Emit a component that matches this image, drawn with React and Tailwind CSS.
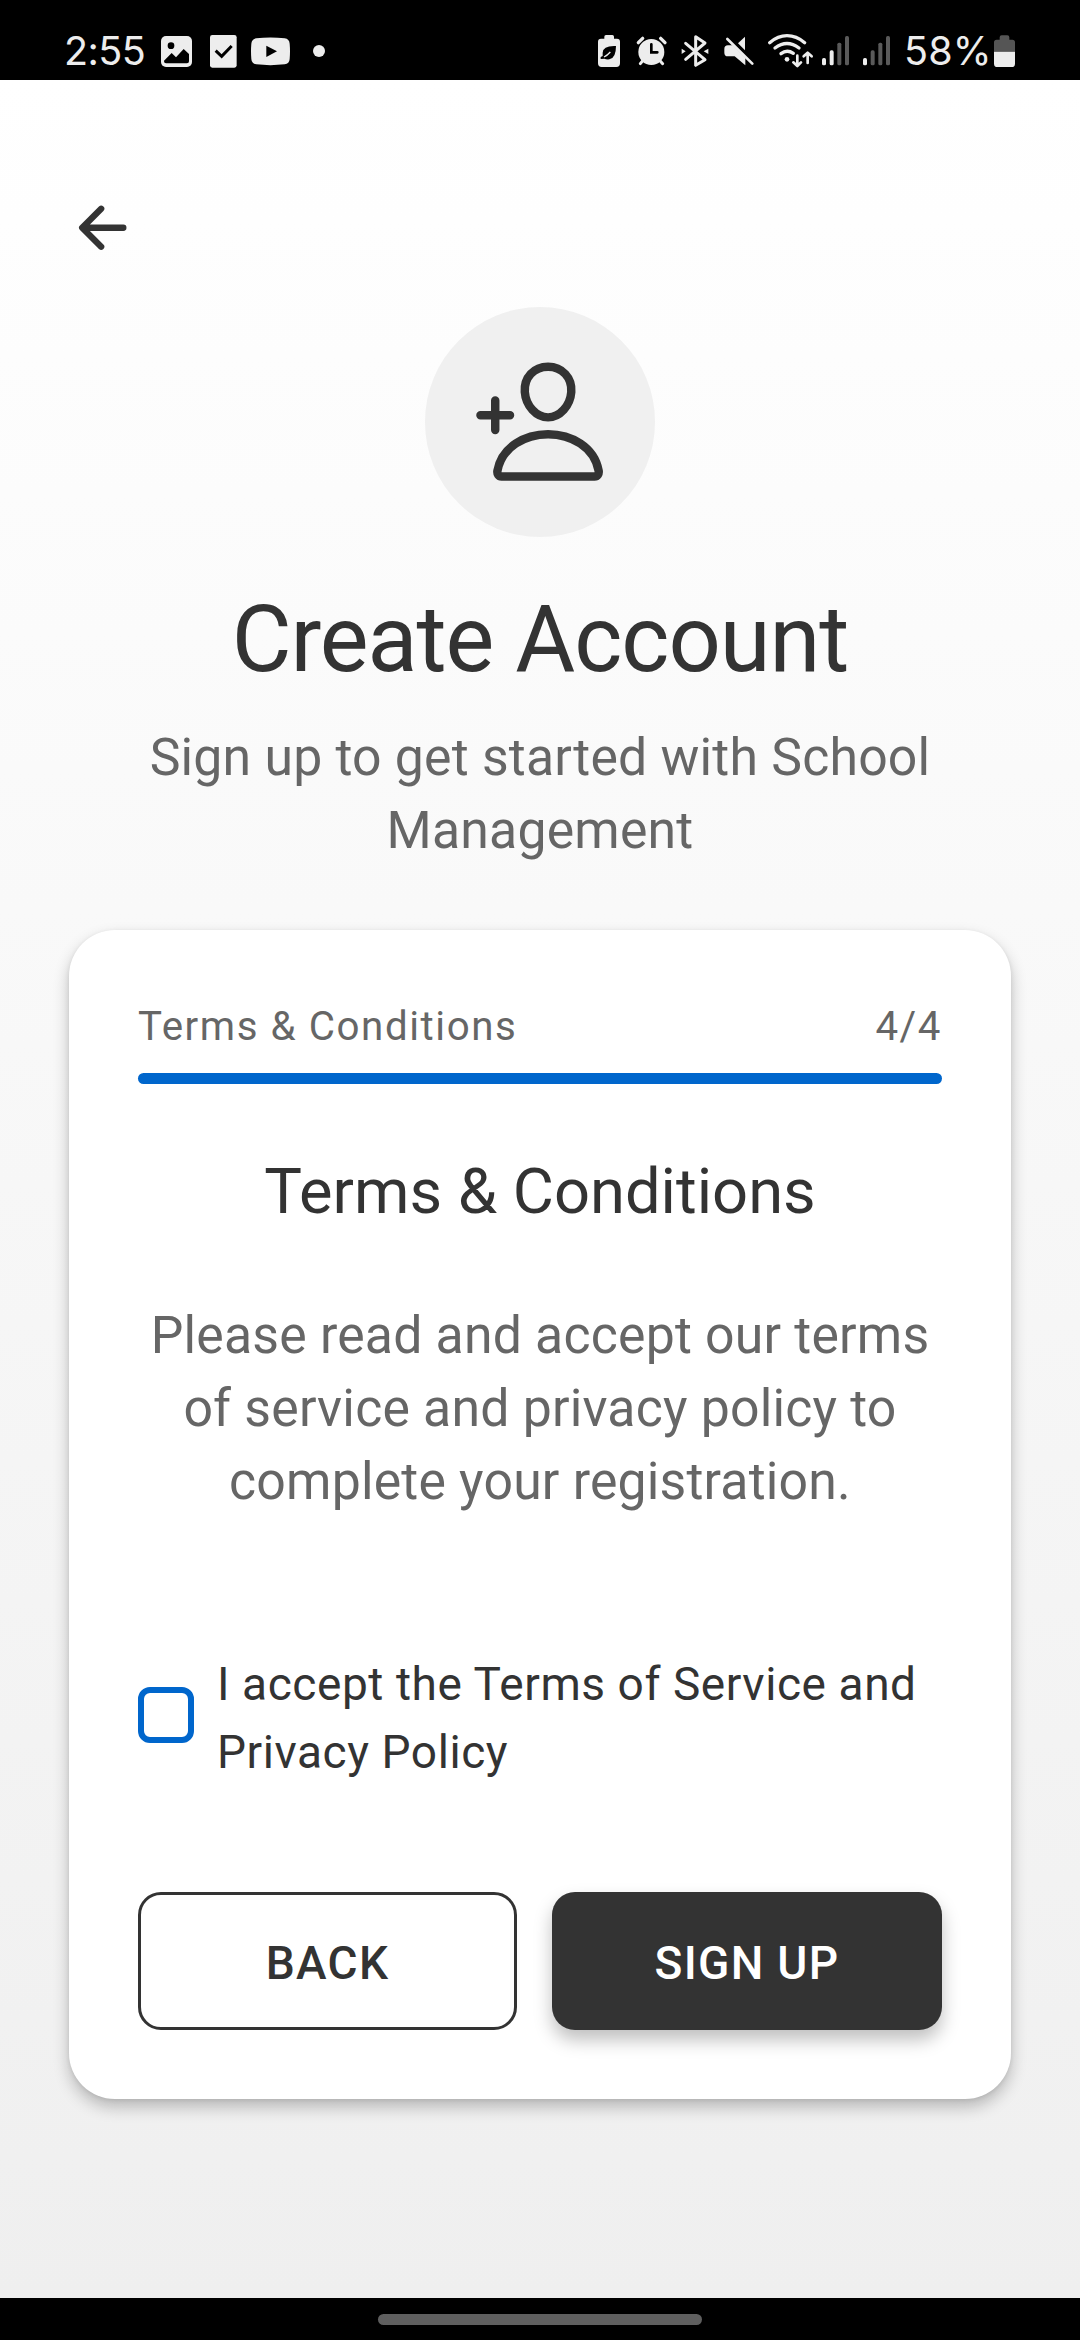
import React from "react";
import { IoArrowBackOutline, IoPersonAddOutline } from "react-icons/io5";

// Status icons share one vertical grid: 240 units for the 80px bar height.
function Glyph({ x, w, className, children }) {
  return (
    <svg
      viewBox={`${x} 0 ${w} 240`}
      width={w / 3}
      height="80"
      fill="#ededed"
      className={`shrink-0 overflow-visible ${className}`}
    >
      {children}
    </svg>
  );
}

function SignalBars({ x, lit, className }) {
  const tops = [174, 151, 128, 108];
  return (
    <Glyph x={x} w={81} className={className}>
      {tops.map((top, i) => (
        <rect key={top} x={x + i * 23} y={top} width="12" height={196 - top} rx="5" fill={i < lit ? "#ededed" : "#5a5a5a"} />
      ))}
    </Glyph>
  );
}

function StatusBar() {
  return (
    <header className="flex h-20 justify-between bg-black pl-16 pr-[65px] font-['Inter',sans-serif] text-[39.5px] leading-[102px] text-[#ededed]">
      <div className="flex h-20">
        <span className="w-20 whitespace-nowrap tracking-[-0.6px]">2:55</span>
        <Glyph x={363} w={93} className="ml-[17px]">
          <rect x="363" y="108" width="93" height="93" rx="15" />
          <circle cx="393" cy="137" r="10" fill="#000" />
          <path d="M372 182 L395 159 L408 172 L431 147 L447 162 V184 Q447 190 441 190 H378 Q372 190 372 184Z" fill="#000" />
        </Glyph>
        <Glyph x={510} w={80} className="ml-[18px]">
          <rect x="510" y="105" width="80" height="98" rx="7" />
          <path d="M527 152 L545 169 L575 138" fill="none" stroke="#000" strokeWidth="9" />
        </Glyph>
        <Glyph x={633} w={117} className="ml-[14.33px]">
          <path d="M649 115 Q691 110 734 115 Q748 117 749 131 Q751 154 749 177 Q748 191 734 193 Q691 198 649 193 Q635 191 634 177 Q632 154 634 131 Q635 117 649 115Z" />
          <path d="M679 137 L711 154 L679 171Z" fill="#000" />
        </Glyph>
        <Glyph x={819} w={36} className="ml-[23px]">
          <circle cx="837" cy="153" r="18" />
        </Glyph>
      </div>
      <div className="flex h-20">
        <Glyph x={54} w={66}>
          <path d="M73 110 Q73 105 78 105 H97 Q102 105 102 110 V116 H111 Q120 116 120 125 V190 Q120 201 109 201 H65 Q54 201 54 190 V125 Q54 116 63 116 H73Z" />
          <path d="M108 138 Q69 136 68 158 V168 L62 171 V177 L73 176 Q79 179 88 178 Q108 175 108 138Z" fill="#000" />
          <path d="M72 171 Q81 167 91 156" fill="none" stroke="#ededed" strokeWidth="4" />
        </Glyph>
        <Glyph x={171} w={88} className="ml-[17px]">
          <circle cx="214" cy="156" r="39" />
          <path d="M175 128 L188 115 M255 128 L242 115" stroke="#ededed" strokeWidth="10" strokeLinecap="round" />
          <path d="M190 180 L181 191 M238 180 L248 191" stroke="#ededed" strokeWidth="9" strokeLinecap="round" />
          <path d="M214 133 V157 H232" fill="none" stroke="#000" strokeWidth="8" strokeLinecap="round" />
        </Glyph>
        <Glyph x={303} w={84} className="ml-[14.67px]">
          <path d="M317 130 L375 179 L347 196 V110 L375 129 L317 178" fill="none" stroke="#ededed" strokeWidth="9" strokeLinejoin="round" strokeLinecap="round" />
          <path d="M305 146 L317 154 L305 162Z M385 146 L371 154 L385 162Z" />
        </Glyph>
        <Glyph x={431} w={89} className="ml-[14.67px]">
          <path d="M494 110 V151 L473 130Z" />
          <path d="M443 136 H457 L495 173 V196 L463 169 H443 Q432 169 432 158 V147 Q432 136 443 136Z" />
          <path d="M441 117 L516 191" stroke="#ededed" strokeWidth="8" strokeLinecap="round" />
        </Glyph>
        <Glyph x={563} w={137} className="ml-[14.33px]">
          <g fill="none" stroke="#ededed" strokeWidth="10" strokeLinecap="round">
            <path d="M568 128 Q593 107 620 107 Q648 107 673 128" />
            <path d="M584 144 Q620 117 656 144" />
            <path d="M602 161 Q620 147 639 160" />
          </g>
          <circle cx="620" cy="178" r="7" />
          <path d="M651 167 V197 M639 187 L651 198 L662 187 M682 189 V159 M670 169 L682 158 L694 169" fill="none" stroke="#ededed" strokeWidth="8" strokeLinecap="round" strokeLinejoin="round" />
        </Glyph>
        <SignalBars x={66} lit={2} className="ml-[8.67px]" />
        <SignalBars x={189} lit={1} className="ml-[14px]" />
        <span className="w-[104px] whitespace-nowrap pl-[14px] tracking-[0.2px]">58%</span>
        <Glyph x={582} w={63}>
          <path d="M599 112 Q599 106 605 106 H622 Q628 106 628 112 V119 H637 Q645 119 645 127 V155 H582 V127 Q582 119 590 119 H599Z" fill="#555" />
          <path d="M582 155 H645 V191 Q645 201 635 201 H592 Q582 201 582 191Z" />
        </Glyph>
      </div>
    </header>
  );
}

export default function App() {
  return (
    <div className="flex h-[2340px] w-[1080px] flex-col bg-black font-['Roboto',sans-serif] text-[#333333]">
      <StatusBar />

      <main className="flex h-[2218px] flex-col bg-linear-to-b from-white to-[#efefef] px-[69px]">
        <button aria-label="Go back" className="mt-[114px] size-[67.5px]">
          <IoArrowBackOutline className="size-[67.5px]" />
        </button>

        <div className="mt-[45.5px] flex size-[230px] items-center justify-center self-center rounded-full bg-[#f0f0f0]">
          <IoPersonAddOutline className="size-[135.2px]" />
        </div>

        <h1 className="mt-[46px] text-center text-[92px] leading-[113px] tracking-[-1.03px]">Create Account</h1>
        <p className="mt-[25px] text-center text-[51.75px] leading-[73px] tracking-[0.2px] text-[#666666]">
          Sign up to get started with School
          <br />
          Management
        </p>

        <section className="mt-[63px] rounded-[46px] bg-white p-[69px] shadow-[0_8px_16px_rgba(0,0,0,0.24),0_1px_4px_rgba(0,0,0,0.08)]">
          <div className="flex justify-between text-[40.25px] leading-[55px] tracking-[1.58px] text-[#666666]">
            <span>Terms &amp; Conditions</span>
            <span>4/4</span>
          </div>
          <div className="mt-[19px] h-[11px] rounded-full bg-[#0066cc]" />

          <h2 className="mt-[67px] text-center text-[63.25px] leading-[80px]">Terms &amp; Conditions</h2>
          <p className="mt-[68px] text-center text-[51.75px] leading-[73px] tracking-[0.2px] text-[#666666]">
            Please read and accept our terms
            <br />
            of service and privacy policy to
            <br />
            complete your registration.
          </p>

          <label className="mt-[132px] flex items-start">
            <span className="mt-[37px] size-14 shrink-0 rounded-[12px] border-6 border-[#0066cc]" />
            <span className="ml-[23px] whitespace-nowrap text-[46px] leading-[68px] tracking-[0.57px]">
              I accept the Terms of Service and
              <br />
              Privacy Policy
            </span>
          </label>

          <div className="mt-[106px] flex gap-[35px] text-[46px] font-medium tracking-[1.3px]">
            <button className="h-[138px] w-[379px] rounded-[23px] border-3 border-[#333333] pt-1">BACK</button>
            <button className="h-[138px] w-[390px] rounded-[23px] bg-[#333333] pt-1 text-white shadow-[0_10px_18px_rgba(0,0,0,0.25)]">
              SIGN UP
            </button>
          </div>
        </section>
      </main>

      <footer className="flex h-[42px] items-start justify-center pt-4">
        <div className="h-[11px] w-[324px] rounded-full bg-[#5f5f5f]" />
      </footer>
    </div>
  );
}
